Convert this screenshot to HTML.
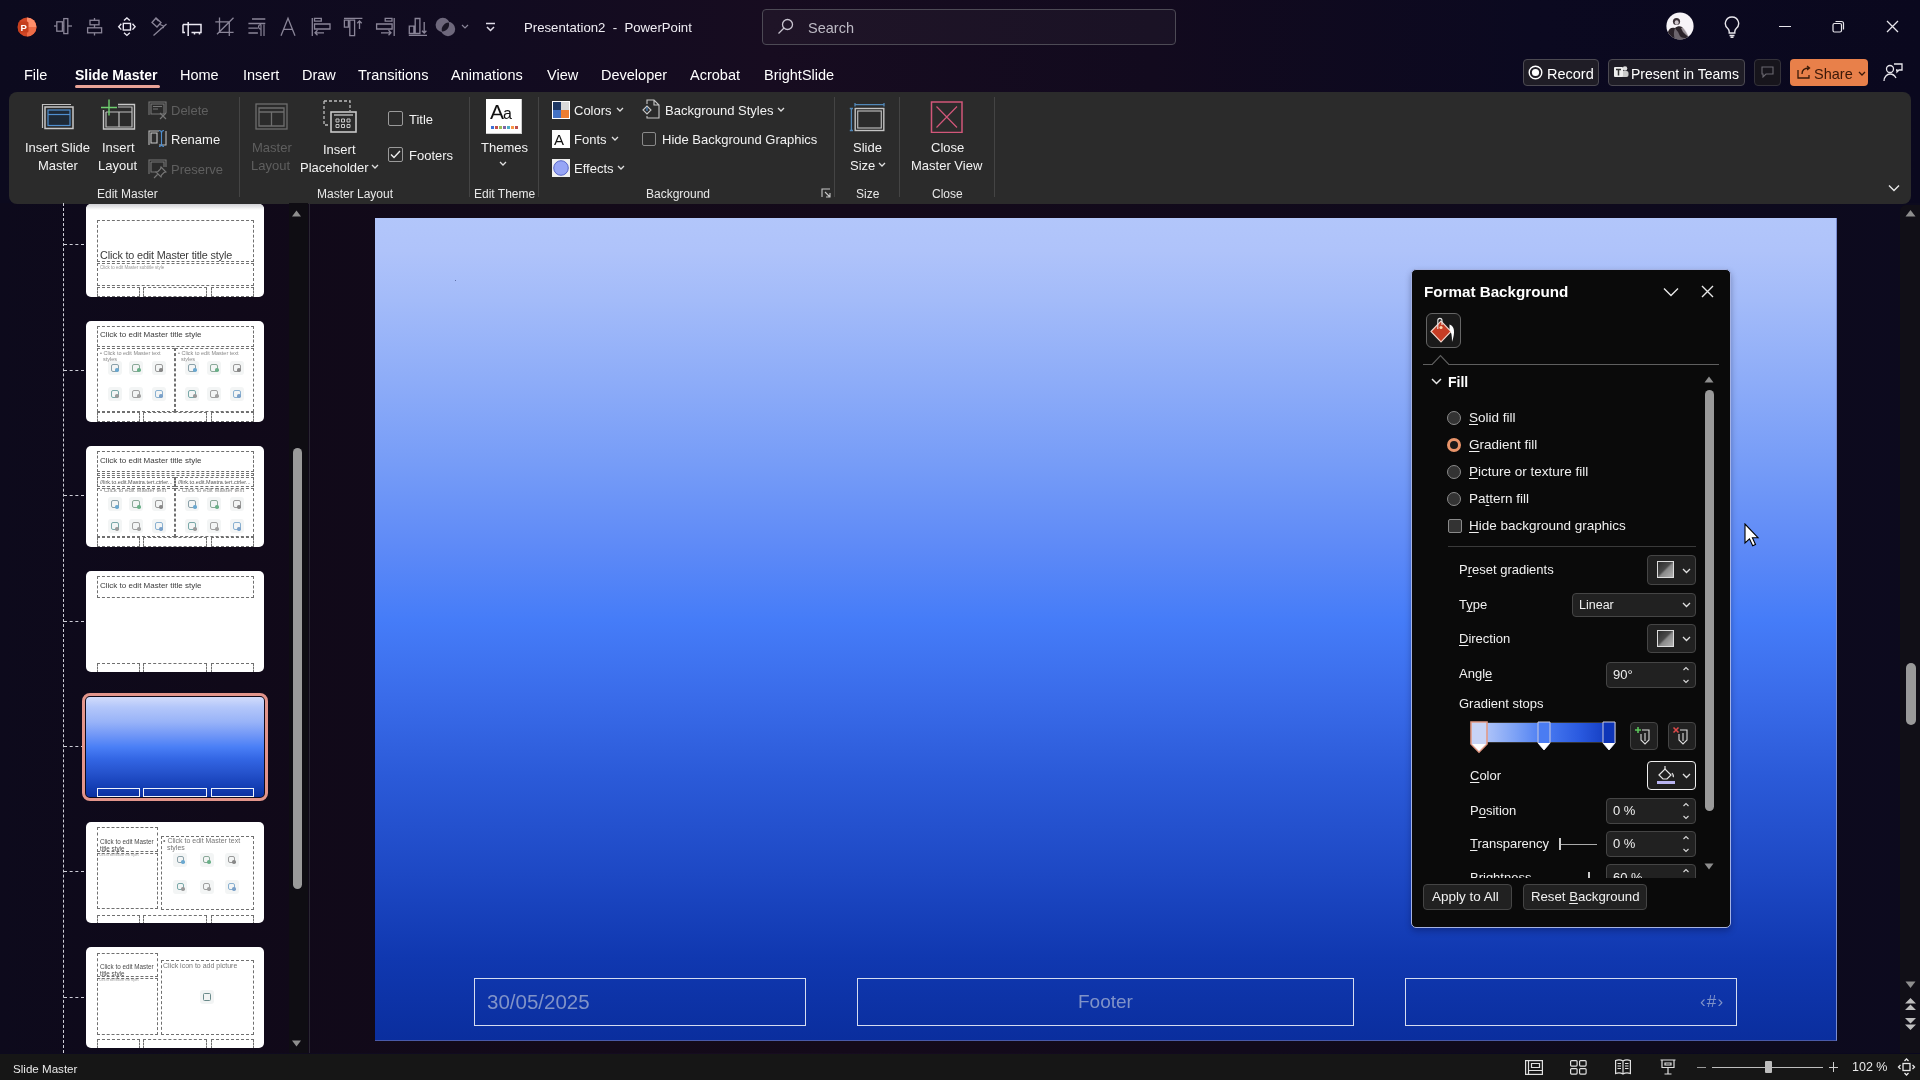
<!DOCTYPE html>
<html><head><meta charset="utf-8">
<style>
*{margin:0;padding:0;box-sizing:border-box}
.a,.rt,.tab,.pt,.glabel,.tt{will-change:transform}
html,body{width:1920px;height:1080px;overflow:hidden}
body{position:relative;font-family:"Liberation Sans",sans-serif;color:#fff;
background:linear-gradient(90deg,#0c0a1e 0%,#110b20 25%,#170c20 40%,#120a1e 60%,#0b0920 80%,#0a081e 100%)}
.a{position:absolute;white-space:nowrap}
#main{position:absolute;left:0;top:203px;width:1920px;height:850px;background:linear-gradient(90deg,#0d0a1c 0%,#100919 12%,#130a19 30%,#140a1a 45%,#110a1b 65%,#0e0a1d 85%,#0c0a1e 100%)}
#ribbon{position:absolute;left:9px;top:92px;width:1902px;height:112px;background:#2b2b2b;border-radius:8px}
.tab{position:absolute;top:63.5px;font-size:14.5px;color:#fff;line-height:22px}
.rt{position:absolute;font-size:13px;line-height:16px;color:#f2f2f2;white-space:nowrap;margin-top:1px}
.dis{color:#5f5f5f}
.sep{position:absolute;top:97px;width:1px;height:100px;background:#444}
.glabel{position:absolute;top:185.5px;font-size:12px;line-height:16px;color:#e8e8e8;white-space:nowrap}
#slide{position:absolute;left:375px;top:218px;width:1462px;height:823px;border-right:1px solid #7a8cd0;border-bottom:1px solid #4a5aa8;
background:linear-gradient(180deg,#b2c6fa 0%,#afc3fa 4%,#a3bbf9 10%,#8dacf8 20%,#769cf7 30%,#5e8af7 40%,#457cf8 49%,#3a6cea 58%,#2b5ad8 68%,#1d48c4 80%,#1038b0 90%,#0a2e9e 100%)}
.fb{position:absolute;border:1.5px solid #d5dcf0;top:978px;height:48px}
#status{position:absolute;left:0;top:1054px;width:1920px;height:26px;background:#161616}
#pane{position:absolute;left:1411px;top:268.5px;width:320px;height:659px;background:#0a0a0a;border:1.5px solid #a4b2e4;border-radius:5px;box-shadow:0 3px 6px rgba(0,0,40,0.3)}
.pt{position:absolute;font-size:13px;line-height:16px;color:#f0f0f0;white-space:nowrap}
u{text-decoration:underline;text-underline-offset:2px;text-decoration-thickness:1px}
.thumb{position:absolute;left:86px;width:178px;background:#fff;border-radius:5px;overflow:hidden}
.db{position:absolute;border:1.2px dashed #707070}
.tt{position:absolute;white-space:nowrap}
.conn{position:absolute;left:64px;width:20px;border-top:1.5px dashed #cfcfd8}
</style></head><body>
<div id="main"></div>

<!-- ===== TITLE BAR ===== -->
<div id="titlebar">
<!-- PowerPoint logo -->
<svg class="a" style="left:17px;top:17px" width="20" height="20" viewBox="0 0 20 20">
<circle cx="10" cy="10" r="9.5" fill="#d24726"/>
<path d="M10 0.5 A9.5 9.5 0 0 1 19.5 10 L10 10Z" fill="#ff8f6b"/>
<path d="M10 10 L19.5 10 A9.5 9.5 0 0 1 10 19.5Z" fill="#ed6c47"/>
<rect x="1.5" y="4.5" width="10" height="11" rx="1.5" fill="#c43e1c"/>
<text x="3.6" y="13.6" font-family="Liberation Sans" font-weight="bold" font-size="9.5" fill="#fff">P</text>
</svg>
<!-- QAT icons -->
<svg class="a" style="left:0;top:0" width="500" height="50" viewBox="0 0 500 50" fill="none" stroke="#8a8598" stroke-width="1.3">
<path d="M54 26h18"/><rect x="56.8" y="21.8" width="5.6" height="9.4" fill="#0d0a1e"/><rect x="63.8" y="18.6" width="4" height="15" fill="#0d0a1e"/>
<path d="M94.5 18v17.5"/><rect x="90" y="20.3" width="9" height="4.5" fill="#0d0a1e"/><rect x="87.6" y="27.8" width="14" height="5" fill="#0d0a1e"/>
<g stroke="#ebe8f2" stroke-width="1.4"><rect x="123.3" y="23.4" width="7.2" height="6.6"/><path d="M124 20.5l2.9-2.6 2.9 2.6M124 32.8l2.9 2.6 2.9-2.6M121.3 23.8l-2.6 2.9 2.6 2.9M132.5 23.8l2.6 2.9-2.6 2.9"/></g>
<path d="M152 22.5l4-4.5 5 4.5-4 4.5zM155.5 18l3 3M160 24.5l3.5 1.5M166.5 24L153.5 35.5M160.5 28.5l3.5-1"/>
<g stroke="#ebe8f2" stroke-width="1.5"><path d="M188.2 22v14M183 24.4h18v8.2h-9.5M183 24.4v8.2h2M194.5 32.6v2M199.5 32.6v2"/></g>
<path d="M219.5 17.6v14.8h14.1M215.3 21.8h14v14.1M217 34.3l16.5-16.5"/>
<path d="M252 19h13.3M248.4 23.5h16.9M248.4 28.2h9.5M248.4 33h9.5"/><path d="M261 24.5v11.5M264 24.5v11.5M261 24.5c-3 0-3.5 4.5 0 4.5" stroke-width="1.2"/>
<path d="M281 35.7L288 18.2l7 17.5M283.6 29.3h8.8"/>
<path d="M312.3 18v18M314.5 18.4h6.8v2.8h-6.8zM314.5 24h15.5v5h-15.5zM315 32.8h9M317.5 30.3L315 32.8l2.5 2.5"/>
<path d="M344 18.4h18.4M344.4 20.2h4v7h-4zM349.8 20.2h4.8v15.5h-4.8zM359.5 21v8M357.3 23.2l2.2-2.2 2.2 2.2"/>
<path d="M394.2 18v18M385.2 18.4h6.8v2.8h-6.8zM376.6 24h15.5v5h-15.5zM381 32.8h10M388.5 30.3l2.5 2.5-2.5 2.5"/>
<path d="M408.8 35.3h18.2M409.3 26.2h4.6v7.3h-4.6zM415.2 18.5h4.7v15h-4.7zM424.2 22v11M422 30.8l2.2 2.2 2.2-2.2"/>
</svg>
<svg class="a" style="left:435px;top:17px" width="21" height="20" viewBox="0 0 21 20">
<circle cx="7.8" cy="8" r="7.2" fill="#6e687c"/><circle cx="13" cy="12" r="7.2" fill="#6e687c"/>
<path d="M7 14.6C5.8 11 8.3 5.8 13.8 5.4 15 9 12.5 14.2 7 14.6z" fill="#1a1625"/></svg>
<svg class="a" style="left:461px;top:24px" width="8" height="5" viewBox="0 0 8 5" fill="none" stroke="#8a8598" stroke-width="1.2"><path d="M1 1l3 3 3-3"/></svg>
<svg class="a" style="left:485px;top:22px" width="11" height="11" viewBox="0 0 11 11" fill="none" stroke="#e0dce8" stroke-width="1.5"><path d="M1 1.5h9M2 5l3.5 3.5L9 5"/></svg>
<div class="a" style="left:524px;top:19px;font-size:13.2px;line-height:18px;color:#f0eef4">Presentation2&nbsp; -&nbsp; PowerPoint</div>
<!-- search -->
<div class="a" style="left:762px;top:9px;width:414px;height:36px;border:1px solid #4d4a55;border-radius:4px;background:rgba(255,255,255,0.035)"></div>
<svg class="a" style="left:777px;top:18px" width="17" height="17" viewBox="0 0 17 17" fill="none" stroke="#c8c4cf" stroke-width="1.3"><circle cx="10.5" cy="6.5" r="5"/><path d="M7 10L1.5 15.5"/></svg>
<div class="a" style="left:808px;top:20px;font-size:14.5px;line-height:17px;color:#bdbac4">Search</div>
<!-- avatar -->
<svg class="a" style="left:1666px;top:12px" width="28" height="28" viewBox="0 0 28 28">
<defs><clipPath id="avc"><circle cx="14" cy="14" r="13.6"/></clipPath></defs>
<circle cx="14" cy="14" r="13.6" fill="#f7f4f8"/>
<g clip-path="url(#avc)">
<path d="M2 20 C3 16 6 15 9 16 C11 14 14 13.5 16 15 C18 17 20 20 22 24 L20 30 L2 30Z" fill="#2a2228"/>
<path d="M9 16 C10 18 12 19 13 22 C14 25 16 26 19 26 L21 30 L10 30 C8 26 7 22 9 16Z" fill="#9a929a" opacity="0.6"/>
<circle cx="10.5" cy="9.5" r="3.6" fill="#3a3036"/>
<ellipse cx="10.7" cy="10.5" rx="2" ry="2.3" fill="#cfc6cc"/>
<path d="M15 16 C17 15 19 17 21 21 L23 25 C21 24 19 22 17 20Z" fill="#c4bcc2" opacity="0.7"/>
</g></svg>
<!-- lightbulb -->
<svg class="a" style="left:1724px;top:16px" width="16" height="22" viewBox="0 0 16 22" fill="none" stroke="#e8e6ec" stroke-width="1.4">
<path d="M8 1a6.5 6.5 0 0 0-4 11.7c.8.8 1.2 1.7 1.2 3V17h5.6v-1.3c0-1.3.4-2.2 1.2-3A6.5 6.5 0 0 0 8 1z"/><path d="M5.5 19.5h5M6.5 21.3h3"/></svg>
<div class="a" style="left:1779px;top:26px;width:12px;height:1.3px;background:#e8e6ec"></div>
<svg class="a" style="left:1832px;top:20px" width="13" height="13" viewBox="0 0 13 13" fill="none" stroke="#e8e6ec" stroke-width="1.2"><rect x="1" y="3.5" width="8.5" height="8.5" rx="1.5"/><path d="M3.5 1.5h6a2 2 0 0 1 2 2v6"/></svg>
<svg class="a" style="left:1886px;top:20px" width="13" height="13" viewBox="0 0 13 13" fill="none" stroke="#e8e6ec" stroke-width="1.3"><path d="M1 1l11 11M12 1L1 12"/></svg>
<!-- right action buttons -->
<div class="a" style="left:1523px;top:59px;width:76px;height:27px;border:1px solid #4c4a52;border-radius:4px;background:#1f1d26"></div>
<svg class="a" style="left:1528px;top:65px" width="15" height="15" viewBox="0 0 15 15"><circle cx="7.5" cy="7.5" r="6.3" fill="none" stroke="#fff" stroke-width="1.4"/><circle cx="7.5" cy="7.5" r="3.6" fill="#fff"/></svg>
<div class="a" style="left:1547px;top:66px;font-size:14.5px;line-height:17px;color:#fff">Record</div>
<div class="a" style="left:1608px;top:59px;width:137px;height:27px;border:1px solid #4c4a52;border-radius:4px;background:#1f1d26"></div>
<svg class="a" style="left:1613px;top:65px" width="16" height="15" viewBox="0 0 16 15"><circle cx="12" cy="3.5" r="2.3" fill="#ddd"/><rect x="8" y="6" width="7.5" height="6" rx="2" fill="#ccc"/><rect x="1" y="2" width="9" height="10" rx="1" fill="#eee"/><path d="M3 4.5h5M5.5 4.5v6" stroke="#333" stroke-width="1.5"/></svg>
<div class="a" style="left:1631px;top:66px;font-size:14px;line-height:17px;color:#fff">Present in Teams</div>
<div class="a" style="left:1754px;top:59px;width:27px;height:27px;border:1px solid #34323a;border-radius:4px;background:#17151c"></div>
<svg class="a" style="left:1761px;top:66px" width="13" height="12" viewBox="0 0 13 12" fill="none" stroke="#6a6870" stroke-width="1.1"><path d="M1 1h11v7H5l-3 3V8H1z"/></svg>
<div class="a" style="left:1790px;top:59px;width:78px;height:27px;border-radius:4px;background:#e8804a"></div>
<svg class="a" style="left:1797px;top:65px" width="15" height="14" viewBox="0 0 15 14" fill="none" stroke="#3a1a08" stroke-width="1.3"><path d="M1 5v8h11v-3"/><path d="M5 9c0-4 3-6 7-6M10 1l2.5 2L10 5"/></svg>
<div class="a" style="left:1814px;top:66px;font-size:14.5px;line-height:17px;color:#3b1808">Share</div>
<svg class="a" style="left:1858px;top:71px" width="8" height="5" viewBox="0 0 8 5" fill="none" stroke="#3b1808" stroke-width="1.3"><path d="M1 1l3 3 3-3"/></svg>
<svg class="a" style="left:1883px;top:62px" width="20" height="20" viewBox="0 0 20 20" fill="none" stroke="#e8e6ec" stroke-width="1.3"><circle cx="7" cy="7" r="3.5"/><path d="M1 19c0-4 3-7 6-7s5 2 6 4"/><path d="M11 2h8v6h-3l-2 2V8h-1"/></svg>
</div>

<!-- ===== TABS ===== -->
<div class="tab" style="left:24px">File</div>
<div class="tab" style="left:75px;font-weight:bold;font-size:14px">Slide Master</div>
<div class="a" style="left:75px;top:85px;width:85px;height:3px;background:#e9a397;border-radius:2px"></div>
<div class="tab" style="left:180px">Home</div>
<div class="tab" style="left:243px">Insert</div>
<div class="tab" style="left:302px">Draw</div>
<div class="tab" style="left:358px">Transitions</div>
<div class="tab" style="left:451px">Animations</div>
<div class="tab" style="left:547px">View</div>
<div class="tab" style="left:601px">Developer</div>
<div class="tab" style="left:690px">Acrobat</div>
<div class="tab" style="left:764px">BrightSlide</div>

<!-- ===== RIBBON ===== -->
<div id="ribbon"></div>
<div id="rib">
<!-- Edit Master -->
<svg class="a" style="left:41px;top:102px" width="34" height="28" viewBox="0 0 34 28" fill="none">
<path d="M1.5 26V2.5H30" stroke="#c0c0c0" stroke-width="1.2"/>
<rect x="4" y="5" width="28" height="21.5" stroke="#c8c8c8" stroke-width="1.5"/>
<rect x="7" y="8" width="22" height="15.5" fill="#1e2a38" stroke="#4f8fd0" stroke-width="1.2"/>
<path d="M7 12.5h22" stroke="#4f8fd0" stroke-width="1.2"/>
</svg>
<div class="rt" style="left:25px;top:139px">Insert Slide</div>
<div class="rt" style="left:38px;top:157px">Master</div>
<svg class="a" style="left:100px;top:99px" width="36" height="32" viewBox="0 0 36 32" fill="none">
<path d="M3.5 11v19h31V5.5H18" stroke="#c8c8c8" stroke-width="1.4"/>
<path d="M6 13v15h26V8H18M6 13h26M19 13v15" stroke="#c0c0c0" stroke-width="1.2"/>
<path d="M9 .5v16M1 8.5h16" stroke="#6fd06f" stroke-width="1.4"/>
</svg>
<div class="rt" style="left:102px;top:139px">Insert</div>
<div class="rt" style="left:98px;top:157px">Layout</div>
<svg class="a" style="left:148px;top:101px" width="19" height="19" viewBox="0 0 19 19" fill="none" stroke="#777" stroke-width="1.1">
<path d="M1 14V1h17v11M3 3h13v10H3zM5 5.5h9M5 8h5"/><path d="M12 12l6 6M18 12l-6 6" stroke-width="1.2"/></svg>
<div class="rt dis" style="left:171px;top:102px">Delete</div>
<svg class="a" style="left:148px;top:129px" width="19" height="20" viewBox="0 0 19 20" fill="none">
<path d="M1 16V2h10M18 2v14H11" stroke="#bdbdbd" stroke-width="1.1"/><path d="M3 4h6v10H3z" stroke="#c8c8c8" stroke-width="1.1"/>
<path d="M11 1.5c2 0 2.5 1 2.5 2.5v11c0 1.5.5 2.5 2.5 2.5M16 1.5c-2 0-2.5 1-2.5 2.5v11c0 1.5-.5 2.5-2.5 2.5" stroke="#4f8fd0" stroke-width="1.1"/></svg>
<div class="rt" style="left:171px;top:131px">Rename</div>
<svg class="a" style="left:148px;top:159px" width="19" height="20" viewBox="0 0 19 20" fill="none" stroke="#777" stroke-width="1.1">
<path d="M1 15V1h17v7M3 3h13v5M3 3v10h5"/><path d="M13 8l5 5-2 .5-2.5 2.5-.5 2-5-5 2-.5 2.5-2.5zM9.5 15.5L6 19"/></svg>
<div class="rt dis" style="left:171px;top:161px">Preserve</div>
<div class="glabel" style="left:97px">Edit Master</div>
<div class="sep" style="left:239px"></div>
<!-- Master Layout -->
<svg class="a" style="left:255px;top:103px" width="33" height="28" viewBox="0 0 33 28" fill="none" stroke="#6e6e6e" stroke-width="1.3">
<rect x="1" y="1" width="31" height="25"/><path d="M4 5h25v18H4zM4 9h25M16.5 9v14"/></svg>
<div class="rt dis" style="left:252px;top:139px">Master</div>
<div class="rt dis" style="left:251px;top:157px">Layout</div>
<svg class="a" style="left:323px;top:100px" width="35" height="34" viewBox="0 0 35 34" fill="none">
<path d="M1 1h26v10M1 1v24h5" stroke="#bdbdbd" stroke-width="1.3" stroke-dasharray="3 2"/>
<rect x="8" y="12" width="25" height="20" stroke="#c8c8c8" stroke-width="1.6"/>
<path d="M11 15h19" stroke="#c8c8c8" stroke-width="1.3"/>
<path d="M13 19h3v3h-3zM18.5 19h3v3h-3zM24 19h3v3h-3zM13 24.5h3v3h-3zM18.5 24.5h3v3h-3zM24 24.5h3v3h-3z" stroke="#c8c8c8" stroke-width="1"/>
</svg>
<div class="rt" style="left:323px;top:141px">Insert</div>
<div class="rt" style="left:300px;top:159px">Placeholder</div>
<svg class="a" style="left:371px;top:164px" width="8" height="5" viewBox="0 0 8 5" fill="none" stroke="#e0e0e0" stroke-width="1.3"><path d="M1 1l3 3 3-3"/></svg>
<div class="a" style="left:388px;top:111px;width:15px;height:15px;border:1.3px solid #9a9a9a;border-radius:2px"></div>
<div class="rt" style="left:409px;top:111px">Title</div>
<div class="a" style="left:388px;top:147px;width:15px;height:15px;border:1.3px solid #9a9a9a;border-radius:2px"></div>
<svg class="a" style="left:390px;top:150px" width="11" height="9" viewBox="0 0 11 9" fill="none" stroke="#f0f0f0" stroke-width="1.4"><path d="M1 4.5l3 3L10 1"/></svg>
<div class="rt" style="left:409px;top:147px">Footers</div>
<div class="glabel" style="left:317px">Master Layout</div>
<div class="sep" style="left:469px"></div>
<!-- Edit Theme -->
<div class="a" style="left:486px;top:99px;width:36px;height:35px;background:#fff;box-shadow:inset -1px -1px 0 #ccc"></div>
<div class="a" style="left:490px;top:100px;font-size:21px;line-height:24px;color:#111;letter-spacing:-1px">A<span style="font-size:16px">a</span></div>
<div class="a" style="left:491px;top:126px;width:27px;height:2.5px;background:repeating-linear-gradient(90deg,#3b6fd4 0 3px,transparent 3px 4px,#c0504d 4px 7px,transparent 7px 8px,#9bbb59 8px 11px,transparent 11px 12px,#8064a2 12px 15px,transparent 15px 16px,#4bacc6 16px 19px,transparent 19px 20px,#f79646 20px 23px,transparent 23px 24px,#c0504d 24px 27px)"></div>
<div class="rt" style="left:481px;top:139px">Themes</div>
<svg class="a" style="left:499px;top:161px" width="8" height="5" viewBox="0 0 8 5" fill="none" stroke="#e0e0e0" stroke-width="1.3"><path d="M1 1l3 3 3-3"/></svg>
<div class="glabel" style="left:474px">Edit Theme</div>
<div class="sep" style="left:538px"></div>
<!-- Background -->
<svg class="a" style="left:552px;top:101px" width="18" height="18" viewBox="0 0 18 18"><rect width="18" height="18" fill="#fff"/><rect x="1" y="1" width="8" height="8" fill="#1f3864"/><rect x="9" y="1" width="8" height="8" fill="#d9d9d9"/><rect x="1" y="9" width="8" height="8" fill="#4472c4"/><rect x="9" y="9" width="8" height="8" fill="#ed7d31"/></svg>
<div class="rt" style="left:574px;top:102px">Colors</div>
<svg class="a" style="left:616px;top:107px" width="8" height="5" viewBox="0 0 8 5" fill="none" stroke="#e0e0e0" stroke-width="1.3"><path d="M1 1l3 3 3-3"/></svg>
<div class="a" style="left:552px;top:130px;width:18px;height:18px;background:#fff"></div>
<div class="a" style="left:554px;top:131px;font-size:15px;line-height:17px;color:#111">A</div>
<div class="rt" style="left:574px;top:131px">Fonts</div>
<svg class="a" style="left:611px;top:136px" width="8" height="5" viewBox="0 0 8 5" fill="none" stroke="#e0e0e0" stroke-width="1.3"><path d="M1 1l3 3 3-3"/></svg>
<svg class="a" style="left:552px;top:159px" width="18" height="18" viewBox="0 0 18 18"><rect width="18" height="18" fill="#f0f0f0"/><circle cx="9" cy="9" r="7.3" fill="#97a5f6" stroke="#4e5cc4" stroke-width="0.9"/></svg>
<div class="rt" style="left:574px;top:160px">Effects</div>
<svg class="a" style="left:617px;top:165px" width="8" height="5" viewBox="0 0 8 5" fill="none" stroke="#e0e0e0" stroke-width="1.3"><path d="M1 1l3 3 3-3"/></svg>
<svg class="a" style="left:642px;top:99px" width="18" height="20" viewBox="0 0 18 20" fill="none" stroke="#c8c8c8" stroke-width="1.1"><path d="M5 5V1h7l5 5v13H5v-2M12 1v5h5"/><path d="M1 11l4-4 4 4-4 4z"/><path d="M5 8v4" stroke="#4f8fd0"/></svg>
<div class="rt" style="left:665px;top:102px">Background Styles</div>
<svg class="a" style="left:777px;top:107px" width="8" height="5" viewBox="0 0 8 5" fill="none" stroke="#e0e0e0" stroke-width="1.3"><path d="M1 1l3 3 3-3"/></svg>
<div class="a" style="left:642px;top:132px;width:14px;height:14px;border:1.3px solid #8a8a8a;border-radius:2px"></div>
<div class="rt" style="left:662px;top:131px">Hide Background Graphics</div>
<div class="glabel" style="left:646px">Background</div>
<svg class="a" style="left:821px;top:188px" width="10" height="10" viewBox="0 0 10 10" fill="none" stroke="#c8c8c8" stroke-width="1.1"><path d="M1 9V1h8M4 4l5 5M9 5v4H5"/></svg>
<div class="sep" style="left:834px"></div>
<!-- Size -->
<svg class="a" style="left:849px;top:102px" width="36" height="30" viewBox="0 0 36 30" fill="none">
<path d="M6 2.7h29M6 1v3.4M35 1v3.4M2.4 6.5v22M.8 6.5h3.2M.8 28.5h3.2" stroke="#5288b8" stroke-width="1.3"/>
<rect x="6.2" y="6.5" width="28.6" height="22" stroke="#c4c4c4" stroke-width="1.4"/><rect x="8.7" y="9" width="23.6" height="17" stroke="#b8b8b8" stroke-width="1.2"/></svg>
<div class="rt" style="left:853px;top:139px">Slide</div>
<div class="rt" style="left:850px;top:157px">Size</div>
<svg class="a" style="left:878px;top:162px" width="8" height="5" viewBox="0 0 8 5" fill="none" stroke="#e0e0e0" stroke-width="1.3"><path d="M1 1l3 3 3-3"/></svg>
<div class="glabel" style="left:856px">Size</div>
<div class="sep" style="left:899px"></div>
<!-- Close -->
<svg class="a" style="left:930px;top:101px" width="33" height="32" viewBox="0 0 33 32" fill="none" stroke="#d2577a" stroke-width="1.5"><rect x="1.5" y="1" width="30.5" height="30.5"/><path d="M6.5 5.5l20.5 21M27 5.5L6.5 26.5" stroke-width="1.2"/></svg>
<div class="rt" style="left:931px;top:139px">Close</div>
<div class="rt" style="left:911px;top:157px">Master View</div>
<div class="glabel" style="left:932px">Close</div>
<div class="sep" style="left:994px"></div>
<svg class="a" style="left:1888px;top:184px" width="12" height="8" viewBox="0 0 12 8" fill="none" stroke="#e8e8e8" stroke-width="1.4"><path d="M1 1.5l5 5 5-5"/></svg>
</div>

<!-- ===== THUMBNAIL PANE ===== -->
<div id="thumbs">
<div class="a" style="left:63px;top:203px;width:0;height:850px;border-left:1.5px dashed #cfcfd8"></div>
<div class="conn" style="top:244px"></div><div class="conn" style="top:370px"></div><div class="conn" style="top:495px"></div><div class="conn" style="top:621px"></div><div class="conn" style="top:746px"></div><div class="conn" style="top:871px"></div><div class="conn" style="top:997px"></div><div class="thumb" style="top:204px;height:92.5px"><div class="a" style="left:0;top:-8px;width:178px;height:101px"><div class="db" style="left:11px;top:24px;width:157px;height:42px;"></div><div class="tt" style="left:13.5px;top:54px;font-size:10.8px;line-height:11.3px;color:#3a3a3a;letter-spacing:-0.15px">Click to edit Master title style</div><div class="db" style="left:11px;top:67px;width:157px;height:23px;"></div><div class="tt" style="left:13.5px;top:69px;font-size:4.5px;line-height:5.0px;color:#999;">Click to edit Master subtitle style</div><div class="db" style="left:11px;top:91px;width:43px;height:10px;"></div><div class="db" style="left:57px;top:91px;width:64px;height:10px;"></div><div class="db" style="left:125px;top:91px;width:43px;height:10px;"></div></div><div class="a" style="left:0;top:0;width:178px;height:6px;background:linear-gradient(#d0d0d4,#fff)"></div></div><div class="thumb" style="top:321px;height:101px"><div class="db" style="left:11px;top:5px;width:157px;height:21px;"></div><div class="tt" style="left:13.5px;top:10px;font-size:8px;line-height:8.5px;color:#3a3a3a;">Click to edit Master title style</div><div class="db" style="left:11px;top:27px;width:78px;height:64px;"></div><div class="db" style="left:89px;top:27px;width:79px;height:64px;"></div><div class="tt" style="left:14px;top:29.5px;font-size:5.5px;line-height:6.0px;color:#888;line-height:5.5px">• Click to edit Master text<br>&nbsp;&nbsp;styles</div><div class="tt" style="left:92px;top:29.5px;font-size:5.5px;line-height:6.0px;color:#888;line-height:5.5px">• Click to edit Master text<br>&nbsp;&nbsp;styles</div><div class="a" style="left:21.5px;top:39.8px;width:14px;height:14px;background:#f3f5f5;border-radius:3px"></div><div class="a" style="left:24.5px;top:42.8px;width:8px;height:8px;border:1px solid #8aa0a8;border-radius:2px"></div><div class="a" style="left:29.0px;top:47.3px;width:3.5px;height:3.5px;background:#6aa8d0;border-radius:50%"></div><div class="a" style="left:43.4px;top:39.8px;width:14px;height:14px;background:#f3f5f5;border-radius:3px"></div><div class="a" style="left:46.4px;top:42.8px;width:8px;height:8px;border:1px solid #8aa898;border-radius:2px"></div><div class="a" style="left:50.9px;top:47.3px;width:3.5px;height:3.5px;background:#6ab088;border-radius:50%"></div><div class="a" style="left:65.8px;top:39.8px;width:14px;height:14px;background:#f3f5f5;border-radius:3px"></div><div class="a" style="left:68.8px;top:42.8px;width:8px;height:8px;border:1px solid #9a9a9a;border-radius:2px"></div><div class="a" style="left:73.3px;top:47.3px;width:3.5px;height:3.5px;background:#888;border-radius:50%"></div><div class="a" style="left:21.5px;top:65.8px;width:14px;height:14px;background:#f3f5f5;border-radius:3px"></div><div class="a" style="left:24.5px;top:68.8px;width:8px;height:8px;border:1px solid #7aa8a8;border-radius:2px"></div><div class="a" style="left:29.0px;top:73.3px;width:3.5px;height:3.5px;background:#9a9a9a;border-radius:50%"></div><div class="a" style="left:43.4px;top:65.8px;width:14px;height:14px;background:#f3f5f5;border-radius:3px"></div><div class="a" style="left:46.4px;top:68.8px;width:8px;height:8px;border:1px solid #a0a0a0;border-radius:2px"></div><div class="a" style="left:50.9px;top:73.3px;width:3.5px;height:3.5px;background:#a0a0a0;border-radius:50%"></div><div class="a" style="left:65.8px;top:65.8px;width:14px;height:14px;background:#f3f5f5;border-radius:3px"></div><div class="a" style="left:68.8px;top:68.8px;width:8px;height:8px;border:1px solid #8ab0d0;border-radius:2px"></div><div class="a" style="left:73.3px;top:73.3px;width:3.5px;height:3.5px;background:#7aa0c8;border-radius:50%"></div><div class="a" style="left:99.0px;top:39.8px;width:14px;height:14px;background:#f3f5f5;border-radius:3px"></div><div class="a" style="left:102.0px;top:42.8px;width:8px;height:8px;border:1px solid #8aa0a8;border-radius:2px"></div><div class="a" style="left:106.5px;top:47.3px;width:3.5px;height:3.5px;background:#6aa8d0;border-radius:50%"></div><div class="a" style="left:121.0px;top:39.8px;width:14px;height:14px;background:#f3f5f5;border-radius:3px"></div><div class="a" style="left:124.0px;top:42.8px;width:8px;height:8px;border:1px solid #8aa898;border-radius:2px"></div><div class="a" style="left:128.5px;top:47.3px;width:3.5px;height:3.5px;background:#6ab088;border-radius:50%"></div><div class="a" style="left:143.5px;top:39.8px;width:14px;height:14px;background:#f3f5f5;border-radius:3px"></div><div class="a" style="left:146.5px;top:42.8px;width:8px;height:8px;border:1px solid #9a9a9a;border-radius:2px"></div><div class="a" style="left:151.0px;top:47.3px;width:3.5px;height:3.5px;background:#888;border-radius:50%"></div><div class="a" style="left:99.0px;top:65.8px;width:14px;height:14px;background:#f3f5f5;border-radius:3px"></div><div class="a" style="left:102.0px;top:68.8px;width:8px;height:8px;border:1px solid #7aa8a8;border-radius:2px"></div><div class="a" style="left:106.5px;top:73.3px;width:3.5px;height:3.5px;background:#9a9a9a;border-radius:50%"></div><div class="a" style="left:121.0px;top:65.8px;width:14px;height:14px;background:#f3f5f5;border-radius:3px"></div><div class="a" style="left:124.0px;top:68.8px;width:8px;height:8px;border:1px solid #a0a0a0;border-radius:2px"></div><div class="a" style="left:128.5px;top:73.3px;width:3.5px;height:3.5px;background:#a0a0a0;border-radius:50%"></div><div class="a" style="left:143.5px;top:65.8px;width:14px;height:14px;background:#f3f5f5;border-radius:3px"></div><div class="a" style="left:146.5px;top:68.8px;width:8px;height:8px;border:1px solid #8ab0d0;border-radius:2px"></div><div class="a" style="left:151.0px;top:73.3px;width:3.5px;height:3.5px;background:#7aa0c8;border-radius:50%"></div><div class="db" style="left:11px;top:91px;width:43px;height:10px;"></div><div class="db" style="left:57px;top:91px;width:64px;height:10px;"></div><div class="db" style="left:125px;top:91px;width:43px;height:10px;"></div></div><div class="thumb" style="top:446px;height:101px"><div class="db" style="left:11px;top:5px;width:157px;height:21px;"></div><div class="tt" style="left:13.5px;top:11px;font-size:8px;line-height:8.5px;color:#3a3a3a;">Click to edit Master title style</div><div class="db" style="left:11px;top:27px;width:157px;height:3px;"></div><div class="db" style="left:11px;top:31px;width:78px;height:10px;"></div><div class="db" style="left:89px;top:31px;width:79px;height:10px;"></div><div class="tt" style="left:14px;top:33px;font-size:5.5px;line-height:6.0px;color:#555;">//lirk.to.edit.Mastra.tert.ctrler...</div><div class="tt" style="left:92px;top:33px;font-size:5.5px;line-height:6.0px;color:#555;">//lirk.to.edit.Mastra.tert.ctrler...</div><div class="db" style="left:11px;top:42px;width:78px;height:49px;"></div><div class="db" style="left:89px;top:42px;width:79px;height:49px;"></div><div class="tt" style="left:14px;top:41px;font-size:6px;line-height:6.5px;color:#888;">• Click to edit Master text</div><div class="tt" style="left:92px;top:41px;font-size:6px;line-height:6.5px;color:#888;">• Click to edit Master text</div><div class="a" style="left:21.5px;top:51.0px;width:14px;height:14px;background:#f3f5f5;border-radius:3px"></div><div class="a" style="left:24.5px;top:54.0px;width:8px;height:8px;border:1px solid #8aa0a8;border-radius:2px"></div><div class="a" style="left:29.0px;top:58.5px;width:3.5px;height:3.5px;background:#6aa8d0;border-radius:50%"></div><div class="a" style="left:43.4px;top:51.0px;width:14px;height:14px;background:#f3f5f5;border-radius:3px"></div><div class="a" style="left:46.4px;top:54.0px;width:8px;height:8px;border:1px solid #8aa898;border-radius:2px"></div><div class="a" style="left:50.9px;top:58.5px;width:3.5px;height:3.5px;background:#6ab088;border-radius:50%"></div><div class="a" style="left:65.8px;top:51.0px;width:14px;height:14px;background:#f3f5f5;border-radius:3px"></div><div class="a" style="left:68.8px;top:54.0px;width:8px;height:8px;border:1px solid #9a9a9a;border-radius:2px"></div><div class="a" style="left:73.3px;top:58.5px;width:3.5px;height:3.5px;background:#888;border-radius:50%"></div><div class="a" style="left:21.5px;top:73.0px;width:14px;height:14px;background:#f3f5f5;border-radius:3px"></div><div class="a" style="left:24.5px;top:76.0px;width:8px;height:8px;border:1px solid #7aa8a8;border-radius:2px"></div><div class="a" style="left:29.0px;top:80.5px;width:3.5px;height:3.5px;background:#9a9a9a;border-radius:50%"></div><div class="a" style="left:43.4px;top:73.0px;width:14px;height:14px;background:#f3f5f5;border-radius:3px"></div><div class="a" style="left:46.4px;top:76.0px;width:8px;height:8px;border:1px solid #a0a0a0;border-radius:2px"></div><div class="a" style="left:50.9px;top:80.5px;width:3.5px;height:3.5px;background:#a0a0a0;border-radius:50%"></div><div class="a" style="left:65.8px;top:73.0px;width:14px;height:14px;background:#f3f5f5;border-radius:3px"></div><div class="a" style="left:68.8px;top:76.0px;width:8px;height:8px;border:1px solid #8ab0d0;border-radius:2px"></div><div class="a" style="left:73.3px;top:80.5px;width:3.5px;height:3.5px;background:#7aa0c8;border-radius:50%"></div><div class="a" style="left:99.0px;top:51.0px;width:14px;height:14px;background:#f3f5f5;border-radius:3px"></div><div class="a" style="left:102.0px;top:54.0px;width:8px;height:8px;border:1px solid #8aa0a8;border-radius:2px"></div><div class="a" style="left:106.5px;top:58.5px;width:3.5px;height:3.5px;background:#6aa8d0;border-radius:50%"></div><div class="a" style="left:121.0px;top:51.0px;width:14px;height:14px;background:#f3f5f5;border-radius:3px"></div><div class="a" style="left:124.0px;top:54.0px;width:8px;height:8px;border:1px solid #8aa898;border-radius:2px"></div><div class="a" style="left:128.5px;top:58.5px;width:3.5px;height:3.5px;background:#6ab088;border-radius:50%"></div><div class="a" style="left:143.5px;top:51.0px;width:14px;height:14px;background:#f3f5f5;border-radius:3px"></div><div class="a" style="left:146.5px;top:54.0px;width:8px;height:8px;border:1px solid #9a9a9a;border-radius:2px"></div><div class="a" style="left:151.0px;top:58.5px;width:3.5px;height:3.5px;background:#888;border-radius:50%"></div><div class="a" style="left:99.0px;top:73.0px;width:14px;height:14px;background:#f3f5f5;border-radius:3px"></div><div class="a" style="left:102.0px;top:76.0px;width:8px;height:8px;border:1px solid #7aa8a8;border-radius:2px"></div><div class="a" style="left:106.5px;top:80.5px;width:3.5px;height:3.5px;background:#9a9a9a;border-radius:50%"></div><div class="a" style="left:121.0px;top:73.0px;width:14px;height:14px;background:#f3f5f5;border-radius:3px"></div><div class="a" style="left:124.0px;top:76.0px;width:8px;height:8px;border:1px solid #a0a0a0;border-radius:2px"></div><div class="a" style="left:128.5px;top:80.5px;width:3.5px;height:3.5px;background:#a0a0a0;border-radius:50%"></div><div class="a" style="left:143.5px;top:73.0px;width:14px;height:14px;background:#f3f5f5;border-radius:3px"></div><div class="a" style="left:146.5px;top:76.0px;width:8px;height:8px;border:1px solid #8ab0d0;border-radius:2px"></div><div class="a" style="left:151.0px;top:80.5px;width:3.5px;height:3.5px;background:#7aa0c8;border-radius:50%"></div><div class="db" style="left:11px;top:91px;width:43px;height:10px;"></div><div class="db" style="left:57px;top:91px;width:64px;height:10px;"></div><div class="db" style="left:125px;top:91px;width:43px;height:10px;"></div></div><div class="thumb" style="top:571px;height:101px"><div class="db" style="left:11px;top:4.5px;width:157px;height:22px;"></div><div class="tt" style="left:13.8px;top:11px;font-size:8px;line-height:8.5px;color:#3a3a3a;">Click to edit Master title style</div><div class="db" style="left:11px;top:92px;width:43px;height:10px;"></div><div class="db" style="left:57px;top:92px;width:64px;height:10px;"></div><div class="db" style="left:125px;top:92px;width:43px;height:10px;"></div></div><div class="a" style="left:82px;top:693px;width:186px;height:108px;border:3px solid #e3958b;border-radius:8px"></div><div class="thumb" style="left:86px;top:697px;height:100px;border-radius:4px;background:linear-gradient(180deg,#d2dcfb 0%,#b4c7fa 10%,#98b3f8 25%,#7197f7 38%,#4a7ff6 50%,#3366e4 62%,#2552cc 76%,#143eb4 90%,#0a30a0 100%)"><div class="db" style="left:11px;top:91px;width:43px;height:8.5px;border-color:#f0f3fb;border-style:solid;border-width:1.3px;"></div><div class="db" style="left:57px;top:91px;width:64px;height:8.5px;border-color:#f0f3fb;border-style:solid;border-width:1.3px;"></div><div class="db" style="left:125px;top:91px;width:43px;height:8.5px;border-color:#f0f3fb;border-style:solid;border-width:1.3px;"></div></div><div class="thumb" style="top:822px;height:101px"><div class="db" style="left:11px;top:5px;width:60.5px;height:25px;"></div><div class="tt" style="left:13.5px;top:16.5px;font-size:6.3px;line-height:6.8px;color:#4a4a4a;line-height:6.5px">Click to edit Master<br>title style</div><div class="db" style="left:11px;top:31px;width:60.5px;height:56px;"></div><div class="tt" style="left:13px;top:32px;font-size:3px;line-height:3.5px;color:#999;">Click to edit Master text styles</div><div class="db" style="left:75px;top:14px;width:93px;height:74px;"></div><div class="tt" style="left:77px;top:14.5px;font-size:7px;line-height:7.5px;color:#777;line-height:7px">• Click to edit Master text<br>&nbsp;&nbsp;styles</div><div class="a" style="left:87.4px;top:30.8px;width:14px;height:14px;background:#f3f5f5;border-radius:3px"></div><div class="a" style="left:90.9px;top:34.3px;width:7px;height:7px;border:1px solid #8aa0a8;border-radius:2px"></div><div class="a" style="left:94.9px;top:38.3px;width:3.5px;height:3.5px;background:#6aa8d0;border-radius:50%"></div><div class="a" style="left:113.7px;top:30.8px;width:14px;height:14px;background:#f3f5f5;border-radius:3px"></div><div class="a" style="left:117.2px;top:34.3px;width:7px;height:7px;border:1px solid #8aa898;border-radius:2px"></div><div class="a" style="left:121.2px;top:38.3px;width:3.5px;height:3.5px;background:#6ab088;border-radius:50%"></div><div class="a" style="left:138.8px;top:30.8px;width:14px;height:14px;background:#f3f5f5;border-radius:3px"></div><div class="a" style="left:142.3px;top:34.3px;width:7px;height:7px;border:1px solid #9a9a9a;border-radius:2px"></div><div class="a" style="left:146.3px;top:38.3px;width:3.5px;height:3.5px;background:#888;border-radius:50%"></div><div class="a" style="left:87.4px;top:57.7px;width:14px;height:14px;background:#f3f5f5;border-radius:3px"></div><div class="a" style="left:90.9px;top:61.2px;width:7px;height:7px;border:1px solid #7aa8a8;border-radius:2px"></div><div class="a" style="left:94.9px;top:65.2px;width:3.5px;height:3.5px;background:#9a9a9a;border-radius:50%"></div><div class="a" style="left:113.7px;top:57.7px;width:14px;height:14px;background:#f3f5f5;border-radius:3px"></div><div class="a" style="left:117.2px;top:61.2px;width:7px;height:7px;border:1px solid #a0a0a0;border-radius:2px"></div><div class="a" style="left:121.2px;top:65.2px;width:3.5px;height:3.5px;background:#a0a0a0;border-radius:50%"></div><div class="a" style="left:138.8px;top:57.7px;width:14px;height:14px;background:#f3f5f5;border-radius:3px"></div><div class="a" style="left:142.3px;top:61.2px;width:7px;height:7px;border:1px solid #8ab0d0;border-radius:2px"></div><div class="a" style="left:146.3px;top:65.2px;width:3.5px;height:3.5px;background:#7aa0c8;border-radius:50%"></div><div class="db" style="left:11px;top:92.5px;width:43px;height:10px;"></div><div class="db" style="left:57px;top:92.5px;width:64px;height:10px;"></div><div class="db" style="left:125px;top:92.5px;width:43px;height:10px;"></div></div><div class="thumb" style="top:947px;height:101px"><div class="db" style="left:11px;top:5.5px;width:60.5px;height:24px;"></div><div class="tt" style="left:13.5px;top:16.5px;font-size:6.3px;line-height:6.8px;color:#4a4a4a;line-height:6.5px">Click to edit Master<br>title style</div><div class="db" style="left:11px;top:30.6px;width:60.5px;height:57px;"></div><div class="tt" style="left:13px;top:31.5px;font-size:3px;line-height:3.5px;color:#999;">Click to edit Master text styles</div><div class="db" style="left:75px;top:13px;width:93px;height:75px;"></div><div class="tt" style="left:77px;top:15px;font-size:7px;line-height:7.5px;color:#777;">Click icon to add picture</div><div class="a" style="left:114px;top:43px;width:14px;height:14px;background:#f2f4f4;border-radius:3px"></div><div class="a" style="left:117px;top:46px;width:8px;height:8px;border:1.1px solid #6a8a8a;border-radius:1.5px"></div><div class="db" style="left:11px;top:92.3px;width:43px;height:10px;"></div><div class="db" style="left:57px;top:92.3px;width:64px;height:10px;"></div><div class="db" style="left:125px;top:92.3px;width:43px;height:10px;"></div></div>
<div class="a" style="left:289px;top:203px;width:19px;height:850px;background:#0f0d13"></div>
<div class="a" style="left:309px;top:203px;width:1px;height:850px;background:#2a2732"></div>
<svg class="a" style="left:291px;top:209px" width="11" height="8" viewBox="0 0 11 8"><path d="M1 7.5L5.5 1.5 10 7.5z" fill="#8e8e8e"/></svg>
<div class="a" style="left:292.5px;top:448px;width:9px;height:441px;background:#9a9a9a;border-radius:5px"></div>
<svg class="a" style="left:291px;top:1040px" width="11" height="8" viewBox="0 0 11 8"><path d="M1 .5L5.5 6.5 10 .5z" fill="#8e8e8e"/></svg>
</div>

<!-- ===== SLIDE ===== -->
<div id="slide"></div>
<div class="fb" style="left:474px;width:332px"></div>
<div class="fb" style="left:857px;width:497px"></div>
<div class="fb" style="left:1405px;width:332px"></div>
<div class="a" style="left:487px;top:990.5px;font-size:20.5px;line-height:22px;color:#8093c8">30/05/2025</div>
<div class="a" style="left:1078px;top:991px;font-size:19px;line-height:22px;color:#8093c8">Footer</div>
<div class="a" style="left:1700px;top:991px;font-size:17px;line-height:22px;letter-spacing:1.2px;color:#8093c8">&#8249;#&#8250;</div>
<div class="a" style="left:455px;top:280px;width:1px;height:1px;background:#6070a8"></div>

<!-- ===== FORMAT PANE ===== -->
<div id="pane"></div>
<div id="fmt">
<div class="a" style="left:1424px;top:282px;font-size:15.2px;line-height:20px;font-weight:bold;color:#fff">Format Background</div>
<svg class="a" style="left:1663px;top:287px" width="16" height="10" viewBox="0 0 16 10" fill="none" stroke="#e8e8e8" stroke-width="1.4"><path d="M1 1.5l7 7 7-7"/></svg>
<svg class="a" style="left:1701px;top:285px" width="13" height="13" viewBox="0 0 13 13" fill="none" stroke="#e8e8e8" stroke-width="1.4"><path d="M1 1l11 11M12 1L1 12"/></svg>
<div class="a" style="left:1426px;top:313px;width:35px;height:35px;background:#1a1a1a;border:1.6px solid #656565;border-radius:6px"></div>
<svg class="a" style="left:1430px;top:317px" width="26" height="28" viewBox="0 0 26 28">
<path d="M1 14.5L11 4l10 10.5L11 25z" fill="#c63d25" stroke="#f2d6cc" stroke-width="1.1"/>
<path d="M7.8 12V3.5a2.1 2.1 0 0 1 4.2 0V8" fill="none" stroke="#e8e8e8" stroke-width="1.1"/>
<circle cx="11" cy="10.5" r="1.6" fill="#ffd2a8"/>
<path d="M19.5 7.5C24.5 9 25.5 15 22 25 C22 19 21.5 15 19.5 12.5Z" fill="#fff"/>
</svg>
<div class="a" style="left:1423px;top:364px;width:296px;height:1.2px;background:#5f5f5f"></div>
<svg class="a" style="left:1432px;top:354px" width="17" height="12" viewBox="0 0 17 12"><path d="M0 10.5L8.5 1.5 17 10.5" fill="#0a0a0a" stroke="#5f5f5f" stroke-width="1.2"/><rect x="1" y="10" width="15" height="2" fill="#0a0a0a"/></svg>
<svg class="a" style="left:1431px;top:378px" width="11" height="7" viewBox="0 0 11 7" fill="none" stroke="#e8e8e8" stroke-width="1.5"><path d="M1 1l4.5 4.5L10 1"/></svg>
<div class="a" style="left:1448px;top:374px;font-size:14px;line-height:17px;font-weight:bold;color:#fff">Fill</div>
<svg class="a" style="left:1704px;top:375px" width="10" height="8" viewBox="0 0 10 8"><path d="M.5 7.5L5 1.5 9.5 7.5z" fill="#8e8e8e"/></svg>
<div class="a" style="left:1705px;top:390px;width:9px;height:421px;background:#9a9a9a;border-radius:5px"></div>
<svg class="a" style="left:1704px;top:863px" width="10" height="8" viewBox="0 0 10 8"><path d="M.5 .5L5 6.5 9.5 .5z" fill="#8e8e8e"/></svg>
<div class="a" style="left:1447px;top:410.5px;width:14px;height:14px;border-radius:50%;background:#333;border:1px solid #8a8a8a"></div><div class="pt" style="left:1469px;top:408.5px;font-size:13.5px;line-height:18px"><u>S</u>olid fill</div><div class="a" style="left:1447px;top:437.5px;width:14px;height:14px;border-radius:50%;background:#1a1a1a;border:3.5px solid #e8946a"></div><div class="pt" style="left:1469px;top:435.5px;font-size:13.5px;line-height:18px"><u>G</u>radient fill</div><div class="a" style="left:1447px;top:464.5px;width:14px;height:14px;border-radius:50%;background:#333;border:1px solid #8a8a8a"></div><div class="pt" style="left:1469px;top:462.5px;font-size:13.5px;line-height:18px"><u>P</u>icture or texture fill</div><div class="a" style="left:1447px;top:491.5px;width:14px;height:14px;border-radius:50%;background:#333;border:1px solid #8a8a8a"></div><div class="pt" style="left:1469px;top:489.5px;font-size:13.5px;line-height:18px">Pa<u>t</u>tern fill</div>
<div class="a" style="left:1448px;top:519px;width:14px;height:14px;background:#333;border:1px solid #8a8a8a;border-radius:2px"></div>
<div class="pt" style="left:1469px;top:517px;font-size:13.5px;line-height:18px"><u>H</u>ide background graphics</div>
<div class="a" style="left:1448px;top:546px;width:248px;height:1px;background:#3a3a3a"></div>
<div class="pt" style="left:1459px;top:562px">P<u>r</u>eset gradients</div>
<div class="a" style="left:1647px;top:555px;width:49px;height:30px;background:#212121;border:1px solid #454545;border-radius:4px"></div>
<div class="a" style="left:1657px;top:561px;width:17px;height:17px;border:1px solid #ddd;background:linear-gradient(135deg,#2c2c2c 0%,#4a4a4a 45%,#8a8a8a 55%,#b4b4b4 100%)"></div>
<svg class="a" style="left:1682px;top:568px" width="9" height="6" viewBox="0 0 9 6" fill="none" stroke="#e0e0e0" stroke-width="1.3"><path d="M1 1l3.5 3.5L8 1"/></svg>
<div class="pt" style="left:1459px;top:597px">T<u>y</u>pe</div>
<div class="a" style="left:1572px;top:593px;width:124px;height:24px;background:#212121;border:1px solid #454545;border-radius:4px"></div>
<div class="pt" style="left:1579px;top:597px;font-size:12.5px">Linear</div>
<svg class="a" style="left:1682px;top:602px" width="9" height="6" viewBox="0 0 9 6" fill="none" stroke="#e0e0e0" stroke-width="1.3"><path d="M1 1l3.5 3.5L8 1"/></svg>
<div class="pt" style="left:1459px;top:631px"><u>D</u>irection</div>
<div class="a" style="left:1647px;top:624px;width:49px;height:29px;background:#212121;border:1px solid #454545;border-radius:4px"></div>
<div class="a" style="left:1657px;top:630px;width:17px;height:17px;border:1px solid #ddd;background:linear-gradient(135deg,#2c2c2c 0%,#4a4a4a 45%,#8a8a8a 55%,#b4b4b4 100%)"></div>
<svg class="a" style="left:1682px;top:636px" width="9" height="6" viewBox="0 0 9 6" fill="none" stroke="#e0e0e0" stroke-width="1.3"><path d="M1 1l3.5 3.5L8 1"/></svg>
<div class="pt" style="left:1459px;top:666px">Angl<u>e</u></div>
<div class="a" style="left:1606px;top:662px;width:90px;height:26px;background:#212121;border:1px solid #454545;border-radius:4px"></div><div class="pt" style="left:1613px;top:667px">90°</div><svg class="a" style="left:1682px;top:665px" width="8" height="20" viewBox="0 0 8 20" fill="none" stroke="#d8d8d8" stroke-width="1.1"><path d="M1.5 5L4 2.5 6.5 5M1.5 15L4 17.5 6.5 15"/></svg>
<div class="pt" style="left:1459px;top:696px">Gradient stops</div>
<div class="a" style="left:1471px;top:722px;width:145px;height:21px;background:linear-gradient(90deg,#c6d4fa 0%,#7da2f6 30%,#4a7cf2 50%,#2a5ae0 75%,#0e35b8 100%);border:1px solid #333"></div>
<svg class="a" style="left:1469px;top:720px" width="20" height="34" viewBox="0 0 20 34"><path d="M2 2h16v22l-8 8-8-8z" fill="#c8d4f6" stroke="#e39a85" stroke-width="1.6"/><path d="M3 24h14l-7 7z" fill="#fff"/></svg>
<svg class="a" style="left:1536px;top:720px" width="16" height="32" viewBox="0 0 16 32"><path d="M2 2h12v21l-6 7-6-7z" fill="#4a7cf2" stroke="#ccd" stroke-width="1"/><path d="M2 23h12l-6 7z" fill="#fff"/></svg>
<svg class="a" style="left:1601px;top:720px" width="16" height="32" viewBox="0 0 16 32"><path d="M2 2h12v21l-6 7-6-7z" fill="#0e35b8" stroke="#ccd" stroke-width="1"/><path d="M2 23h12l-6 7z" fill="#fff"/></svg>
<div class="a" style="left:1630px;top:722px;width:28px;height:28px;background:#212121;border:1px solid #454545;border-radius:4px"></div>
<svg class="a" style="left:1634px;top:726px" width="20" height="20" viewBox="0 0 20 20" fill="none" stroke="#ddd" stroke-width="1.1"><path d="M8 4h7v10l-4 4-4-4V8"/><path d="M11 7v8" /><path d="M4 1v6M1 4h6" stroke="#5cc95c" stroke-width="1.5"/></svg>
<div class="a" style="left:1668px;top:722px;width:28px;height:28px;background:#212121;border:1px solid #454545;border-radius:4px"></div>
<svg class="a" style="left:1672px;top:726px" width="20" height="20" viewBox="0 0 20 20" fill="none" stroke="#ddd" stroke-width="1.1"><path d="M8 4h7v10l-4 4-4-4V8"/><path d="M11 7v8" /><path d="M1.5 1.5l5 5M6.5 1.5l-5 5" stroke="#e04a4a" stroke-width="1.5"/></svg>
<div class="pt" style="left:1470px;top:768px"><u>C</u>olor</div>
<div class="a" style="left:1647px;top:761px;width:49px;height:29px;background:#1f1f1f;border:1.5px solid #f0f0f0;border-radius:4px"></div>
<svg class="a" style="left:1656px;top:764px" width="20" height="22" viewBox="0 0 20 22" fill="none" stroke="#e8e8e8" stroke-width="1.2"><path d="M3 11l6-6 6 6-4 4H7z"/><path d="M9 5V2"/><path d="M16 9c1.5 2 2 3 1 4"/><rect x="1" y="17" width="18" height="3" fill="#b8b4f0" stroke="none"/></svg>
<svg class="a" style="left:1682px;top:773px" width="9" height="6" viewBox="0 0 9 6" fill="none" stroke="#e0e0e0" stroke-width="1.3"><path d="M1 1l3.5 3.5L8 1"/></svg>
<div class="pt" style="left:1470px;top:803px">P<u>o</u>sition</div>
<div class="a" style="left:1606px;top:798px;width:90px;height:26px;background:#212121;border:1px solid #454545;border-radius:4px"></div><div class="pt" style="left:1613px;top:803px">0 %</div><svg class="a" style="left:1682px;top:801px" width="8" height="20" viewBox="0 0 8 20" fill="none" stroke="#d8d8d8" stroke-width="1.1"><path d="M1.5 5L4 2.5 6.5 5M1.5 15L4 17.5 6.5 15"/></svg>
<div class="pt" style="left:1470px;top:836px"><u>T</u>ransparency</div>
<div class="a" style="left:1559px;top:838px;width:2px;height:12px;background:#ccc"></div>
<div class="a" style="left:1561px;top:843.5px;width:36px;height:1px;background:#aaa"></div>
<div class="a" style="left:1606px;top:831px;width:90px;height:26px;background:#212121;border:1px solid #454545;border-radius:4px"></div><div class="pt" style="left:1613px;top:836px">0 %</div><svg class="a" style="left:1682px;top:834px" width="8" height="20" viewBox="0 0 8 20" fill="none" stroke="#d8d8d8" stroke-width="1.1"><path d="M1.5 5L4 2.5 6.5 5M1.5 15L4 17.5 6.5 15"/></svg>
<div class="a" style="left:1440px;top:864px;width:262px;height:14px;overflow:hidden">
<div class="pt" style="left:30px;top:6px">Brightness</div>
<div class="a" style="left:148px;top:8px;width:2px;height:12px;background:#ccc"></div>
<div class="a" style="left:166px;top:0px;width:90px;height:26px;background:#212121;border:1px solid #454545;border-radius:4px"></div>
<div class="pt" style="left:173px;top:6px">60 %</div>
<svg class="a" style="left:242px;top:3px" width="8" height="10" viewBox="0 0 8 10" fill="none" stroke="#d8d8d8" stroke-width="1.1"><path d="M1.5 5L4 2.5 6.5 5"/></svg>
</div>
<div class="a" style="left:1423px;top:884px;width:89px;height:26px;background:#212121;border:1px solid #454545;border-radius:4px"></div>
<div class="pt" style="left:1432px;top:889px;font-size:13.5px">Apply to All</div>
<div class="a" style="left:1523px;top:884px;width:124px;height:26px;background:#212121;border:1px solid #454545;border-radius:4px"></div>
<div class="pt" style="left:1531px;top:889px;font-size:13.2px">Reset <u>B</u>ackground</div>
</div>

<!-- ===== STATUS ===== -->
<div id="status"></div>
<div class="a" style="left:13px;top:1060.5px;font-size:11.6px;line-height:16px;color:#e8e8e8">Slide Master</div>
<svg class="a" style="left:1525px;top:1060px" width="18" height="15" viewBox="0 0 18 15" fill="none" stroke="#e0e0e0" stroke-width="1.2"><rect x="0.6" y="0.6" width="16.8" height="13.8"/><path d="M3.5 .6v13.8M3.5 10.5h14M6.5 3.5h8v4h-8z"/></svg>
<svg class="a" style="left:1570px;top:1060px" width="17" height="15" viewBox="0 0 17 15" fill="none" stroke="#e0e0e0" stroke-width="1.2"><rect x="0.6" y="0.6" width="6.5" height="5.5" rx="1"/><rect x="9.6" y="0.6" width="6.5" height="5.5" rx="1"/><rect x="0.6" y="8.6" width="6.5" height="5.5" rx="1"/><rect x="9.6" y="8.6" width="6.5" height="5.5" rx="1"/></svg>
<svg class="a" style="left:1615px;top:1059px" width="16" height="16" viewBox="0 0 16 16" fill="none" stroke="#e0e0e0" stroke-width="1.2"><path d="M.6 1.5c2.5-1 5-1 7.4.5 2.4-1.5 4.9-1.5 7.4-.5v13c-2.5-1-5-1-7.4.5-2.4-1.5-4.9-1.5-7.4-.5zM8 2v13M2.5 4.5h3.5M2.5 7h3.5M2.5 9.5h3.5M10 4.5h3.5M10 7h3.5M10 9.5h3.5"/></svg>
<svg class="a" style="left:1660px;top:1059px" width="16" height="16" viewBox="0 0 16 16" fill="none" stroke="#e0e0e0" stroke-width="1.2"><path d="M.5 1h15M2 1.5v7h12v-7M8 8.5V15M4.5 15h7M5 4h6v2H5z"/></svg>
<div class="a" style="left:1697px;top:1066.5px;width:9px;height:1.2px;background:#9a9a9a"></div>
<div class="a" style="left:1712px;top:1066.5px;width:111px;height:1.2px;background:#bdbdbd"></div>
<div class="a" style="left:1765px;top:1061px;width:6.5px;height:12px;background:#bdbdbd;border-radius:1px"></div>
<div class="a" style="left:1829px;top:1066.5px;width:9px;height:1.2px;background:#cfcfcf"></div>
<div class="a" style="left:1833px;top:1062px;width:1.2px;height:9.5px;background:#cfcfcf"></div>
<div class="a" style="left:1852px;top:1060px;font-size:12.5px;line-height:15px;color:#e8e8e8">102 %</div>
<svg class="a" style="left:1897px;top:1058px" width="19" height="18" viewBox="0 0 19 18" fill="none" stroke="#e8e8e8" stroke-width="1.3"><rect x="6" y="5.5" width="7" height="7"/><path d="M7.5 3L9.5 1l2 2M7.5 15l2 2 2-2M3.5 7L1.5 9l2 2M15.5 7l2 2-2 2"/></svg>
<!-- right scrollbar -->
<div class="a" style="left:1900px;top:205px;width:20px;height:848px;background:#110f17;border-top-left-radius:6px"></div>
<svg class="a" style="left:1905px;top:209px" width="11" height="8" viewBox="0 0 11 8"><path d="M.5 7.5L5.5 1 10.5 7.5z" fill="#8e8e8e"/></svg>
<div class="a" style="left:1905.5px;top:663px;width:9.5px;height:62px;background:#9a9a9a;border-radius:5px"></div>
<svg class="a" style="left:1905px;top:981px" width="11" height="8" viewBox="0 0 11 8"><path d="M.5 .5L5.5 7 10.5 .5z" fill="#8e8e8e"/></svg>
<svg class="a" style="left:1904px;top:997px" width="13" height="14" viewBox="0 0 13 14"><path d="M1 6.5L6.5 1 12 6.5zM1 13L6.5 7.5 12 13z" fill="#bdbdbd"/></svg>
<svg class="a" style="left:1904px;top:1017px" width="13" height="14" viewBox="0 0 13 14"><path d="M1 1L6.5 6.5 12 1zM1 7.5L6.5 13 12 7.5z" fill="#bdbdbd"/></svg>
<!-- cursor -->
<svg class="a" style="left:1744px;top:523px" width="16" height="24" viewBox="0 0 16 24"><path d="M1 1v19l4.5-4.2 3.2 7 2.8-1.3-3.1-6.8H14z" fill="#fff" stroke="#000" stroke-width="1.1"/></svg>
</body></html>
